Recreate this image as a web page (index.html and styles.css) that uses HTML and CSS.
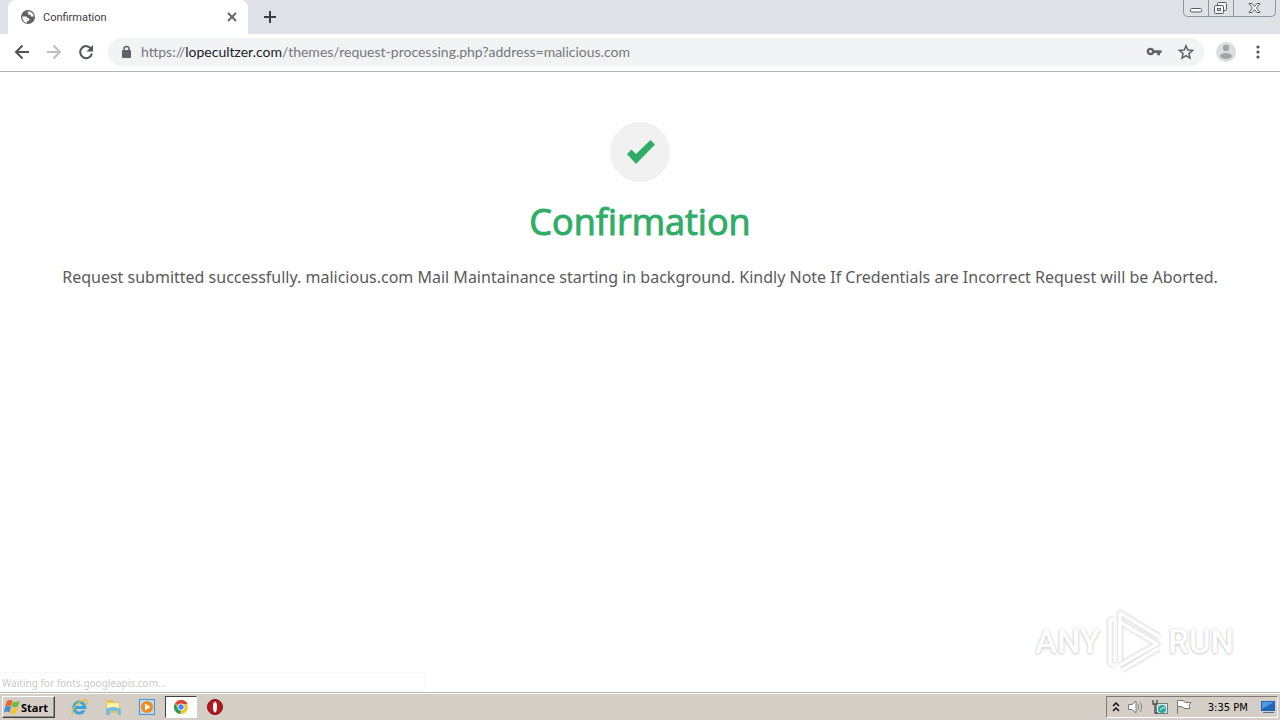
FILE: index.html
```html
<!DOCTYPE html>
<html lang="en">
<head>
<meta charset="utf-8">
<title>Confirmation</title>
<link rel="stylesheet" href="styles.css">
</head>
<body>
<header class="browser">
  <div class="tabstrip">
    <div class="tab">
      <svg class="icon" width="16" height="16" viewBox="0 0 16 16"><circle cx="8" cy="8" r="7" fill="#5f6368"/><path d="M2.200 7.500h4q1.300 0 1.300 1.500 2 0 2 1.500T7 12v2Q2.500 13 2.200 7.500zM8 2.200q-1 1.300.3 2v1.500h2.500V7.500h3Q13.500 3 8 2.200z" fill="#fff"/></svg>
      <span class="tab-title">Confirmation</span>
      <button class="plain" aria-label="Close tab"><svg width="16" height="16" viewBox="0 0 16 16"><path d="M4 4l8 8M12 4l-8 8" stroke="#5f6368" stroke-width="1.800"/></svg></button>
    </div>
    <button class="plain new-tab" aria-label="New tab"><svg width="16" height="16" viewBox="0 0 16 16"><path d="M8 2v12M2 8h12" stroke="#3c4043" stroke-width="2"/></svg></button>
    <div class="window-controls">
      <button class="minimize" aria-label="Minimize"><svg width="24" height="16" viewBox="0 0 24 16"><rect x="6.500" y="8.500" width="11" height="3.500" rx="1" fill="#fff" stroke="#565c66"/></svg></button>
      <button class="restore" aria-label="Restore"><svg width="24" height="16" viewBox="0 0 24 16"><g fill="#f4f5f7" stroke="#565c66"><rect x="8.500" y="2.500" width="9" height="8" rx="1"/><rect x="5.500" y="5.500" width="9" height="8" rx="1"/><rect x="8.500" y="8.500" width="3" height="2"/></g></svg></button>
      <button class="close" aria-label="Close"><svg width="41" height="16" viewBox="0 0 41 16"><path d="M15 3.500h3l2.500 3 2.500-3h3L22.500 8l3.500 4.500h-3l-2.500-3-2.500 3h-3L18.500 8z" fill="#fff" stroke="#565c66"/></svg></button>
    </div>
  </div>
  <nav class="toolbar">
    <button class="plain" aria-label="Back"><svg width="16" height="16" viewBox="0 0 16 16"><path d="M15 8H2.500M8.500 1.500L2 8l6.500 6.500" fill="none" stroke="#50555a" stroke-width="2"/></svg></button>
    <button class="plain" aria-label="Forward"><svg width="16" height="16" viewBox="0 0 16 16"><path d="M1 8h12.500M7.500 1.500L14 8l-6.500 6.500" fill="none" stroke="#bcbec1" stroke-width="2"/></svg></button>
    <button class="plain" aria-label="Reload"><svg width="16" height="16" viewBox="0 0 16 16"><path d="M13.300 5A6 6 0 1 0 14 9.500" fill="none" stroke="#50555a" stroke-width="2"/><path d="M15 1v6.500H8.500z" fill="#50555a"/></svg></button>
    <div class="address">
      <svg class="icon" width="12" height="14" viewBox="0 0 12 14"><rect x="2" y="5" width="9" height="8" rx="1" fill="#5f6368"/><path d="M4 5.500V4a2.500 2.500 0 0 1 5 0v1.500" fill="none" stroke="#5f6368" stroke-width="1.500"/></svg>
      <a class="url" href="#">https://<span class="domain">lopecultzer.com</span>/themes/request-processing.php?address=malicious.com</a>
      <button class="plain" aria-label="Passwords"><svg width="16" height="16" viewBox="0 0 16 16"><circle cx="4.500" cy="7.500" r="2.600" fill="none" stroke="#5f6368" stroke-width="2.400"/><path d="M8 6.300h7.500v2.600H14v2.300h-2.800V8.900H8z" fill="#5f6368"/></svg></button>
      <button class="plain" aria-label="Bookmark"><svg width="16" height="16" viewBox="0 0 16 16"><path d="M8 1.800l1.800 4.300 4.700.4-3.600 3.100 1.100 4.600L8 11.700l-4 2.500 1.100-4.600L1.500 6.500l4.700-.4z" fill="none" stroke="#5f6368" stroke-width="1.500"/></svg></button>
    </div>
    <button class="plain" aria-label="Profile"><svg width="20" height="20" viewBox="0 0 20 20"><circle cx="10" cy="10" r="10" fill="#dcdddf"/><circle cx="10" cy="6" r="3.200" fill="#a3a5a8"/><ellipse cx="10" cy="14" rx="6" ry="3" fill="#a3a5a8"/></svg></button>
    <button class="plain" aria-label="Menu"><svg width="16" height="16" viewBox="0 0 16 16"><g fill="#50555a"><circle cx="8" cy="3" r="1.600"/><circle cx="8" cy="8" r="1.600"/><circle cx="8" cy="13" r="1.600"/></g></svg></button>
  </nav>
</header>
<main class="page">
  <div class="badge"><svg width="30" height="26" viewBox="0 0 30 26"><path d="M2 15l4.500-4.500 4.500 4.500L25.500 1l4.500 4.500L11 25z" fill="#2fac66"/></svg></div>
  <h1>Confirmation</h1>
  <p>Request submitted successfully. malicious.com Mail Maintainance starting in background. Kindly Note If Credentials are Incorrect Request will be Aborted.</p>
  <div class="status">Waiting for fonts.googleapis.com...</div>
  <div class="watermark">
    <span>ANY</span>
    <svg width="60" height="66" viewBox="0 0 60 66"><g class="mark-shadow" fill="none" stroke="#dedede" stroke-width="6" stroke-linejoin="round"><path d="M16 54V5l40 24M16 14l37 22-37 21M10 12H6v43l5 3M18 62l37-22"/></g><g fill="none" stroke="#fff" stroke-width="3.500" stroke-linejoin="round"><path d="M16 54V5l40 24M16 14l37 22-37 21M10 12H6v43l5 3M18 62l37-22"/></g></svg>
    <span>RUN</span>
  </div>
</main>
<footer class="taskbar">
  <button class="start"><svg width="16" height="16" viewBox="0 0 16 16"><path d="M3 2q3-2 5.500 0L7 7.500Q4 5.500 1 7.500z" fill="#e8642a"/><path d="M9 2.500q3 1.500 7-1l-2 6q-3 1.500-6.500 0z" fill="#75b743"/><path d="M1 8q3-2 6 0l-1.500 5.500q-3-2-5.500 0z" fill="#3d8ed8"/><path d="M7.500 8.500q3 1.500 6.500 0l-2 5.500q-3 2-6 0z" fill="#f6c22f"/></svg>Start</button>
  <div class="launchers">
    <button aria-label="Internet Explorer"><svg width="18" height="18" viewBox="0 0 18 18"><path d="M14 12.500A5.500 5.500 0 1 1 14.800 9.500H5" fill="none" stroke="#38a4dc" stroke-width="3"/><path d="M3 16C-1 14 9 1 16 2q2 1 0 5" fill="none" stroke="#e7bd3b" stroke-width="1.500"/></svg></button>
    <button aria-label="Explorer"><svg width="18" height="18" viewBox="0 0 18 18"><path d="M2 2h6l1 2h7v11H2z" fill="#e6c35a"/><path d="M3 5h12v5H3z" fill="#fff2ac"/><path d="M2 11q7-4 15 0v6h-3v-4H6v4H2z" fill="#75bde2"/></svg></button>
    <button aria-label="Media Player"><svg width="18" height="18" viewBox="0 0 18 18"><rect x="1.500" y="1.500" width="15" height="15" fill="#b9dcf5" stroke="#4f91c9"/><circle cx="9" cy="9" r="6" fill="#f18a1c"/><path d="M7 5.500v7L12.500 9z" fill="#fff"/></svg></button>
    <button class="active" aria-label="Chrome"><svg width="16" height="16" viewBox="0 0 16 16"><circle cx="8" cy="8" r="7" fill="#f2c52f"/><path d="M8 8L2 4.500A7 7 0 0 1 14.500 5H8z" fill="#dc4437"/><path d="M2 4.500L5.500 10 8 11l-1 4A7 7 0 0 1 2 4.500z" fill="#269b5b"/><circle cx="8" cy="8" r="3.500" fill="#fff"/><circle cx="8" cy="8" r="2.700" fill="#4285f4"/></svg></button>
    <button aria-label="Opera"><svg width="18" height="18" viewBox="0 0 18 18"><circle cx="9" cy="9" r="7.500" fill="#b5191c" stroke="#7b1014"/><ellipse cx="9" cy="9" rx="2" ry="5.500" fill="#fff"/></svg></button>
  </div>
  <div class="tray">
    <svg width="10" height="12" viewBox="0 0 10 12"><path d="M2 5l3-3 3 3M2 10l3-3 3 3" fill="none" stroke="#111" stroke-width="1.500"/></svg>
    <svg width="18" height="16" viewBox="0 0 18 16"><path d="M1.500 5.500H5L9 2v12l-4-3.500H1.500z" fill="#fff" stroke="#777"/><path d="M11 5q2 3 0 6M13 3q3.500 5 0 10" fill="none" stroke="#888"/></svg>
    <svg width="18" height="16" viewBox="0 0 18 16"><rect x="5.500" y="4.500" width="11" height="10" fill="#dae8ea" stroke="#657f83"/><circle cx="11" cy="10" r="4" fill="#2da6a6"/><path d="M9 11q3-4 5-2" stroke="#fff" fill="none"/><path d="M2 1v4h4V1M4 5v9h3" stroke="#555" stroke-width="1.500" fill="none"/></svg>
    <svg width="18" height="16" viewBox="0 0 18 16"><path d="M2.500 15V1.500H8q2 2 3 2h5l-2 3 1 3H9q-1-2-3-2H3" fill="#fff" stroke="#777"/></svg>
    <time>3:35 PM</time>
    <svg width="16" height="14" viewBox="0 0 16 14"><path d="M1 1h14v10H1z" fill="#2165bd"/><path d="M2 2h12L2 9z" fill="#5399df"/><path d="M3 12.500h11" stroke="#566f8b"/></svg>
  </div>
</footer>
</body>
</html>
```
FILE: styles.css
```css
* { box-sizing: border-box; }
body { margin: 0; min-height: 100vh; display: flex; flex-direction: column; background: #fff; font-family: "Open Sans", "Noto Sans", sans-serif; }
button { font: inherit; margin: 0; }
svg { display: block; flex: none; }
.plain { border: 0; padding: 0; background: none; }
.browser { border-bottom: 1px solid #b2b4b6; }
.tabstrip { height: 34px; display: flex; align-items: center; background: #dee1e6; padding: 0 4px 0 8px; }
.tab { width: 240px; height: 34px; display: flex; align-items: center; gap: 7px; padding: 0 8px 0 12px; background: #fff; border-radius: 8px 8px 0 0; }
.tab-title { flex: 1; font-family: Roboto, sans-serif; font-size: 11px; color: #3c4043; }
.new-tab { margin-left: 14px; }
.window-controls { align-self: flex-start; margin-left: auto; height: 17px; display: flex; border: 1px solid #8f959e; border-top: 0; border-radius: 0 0 5px 5px; }
.window-controls button { display: flex; padding: 0; border: 0; background: none; border-left: 1px solid #8f959e; }
.window-controls .minimize { border-left: 0; }
.toolbar { height: 37px; display: flex; align-items: center; gap: 16px; padding: 0 14px 1px; }
.address { flex: 1; min-width: 0; height: 28px; display: flex; align-items: center; gap: 16px; padding: 0 10px 0 12px; margin: 0 -4px 0 -2px; border-radius: 14px; background: #f1f3f4; }
.address + .plain { margin-right: -2px; }
.url { flex: 1; min-width: 0; margin-left: -7px; overflow: hidden; white-space: nowrap; font-family: Lato, sans-serif; font-size: 14px; line-height: 20px; font-weight: 400; color: #74787c; text-decoration: none; }
.domain { color: #202124; }
.page { position: relative; flex: 1; display: flex; flex-direction: column; align-items: center; padding: 50px 16px 0; text-align: center; }
.badge { width: 60px; height: 60px; display: flex; align-items: center; justify-content: center; border-radius: 50%; background: #f1f1f1; }
h1 { margin: 16px 0 0; font-size: 36px; line-height: 48px; font-weight: 500; color: #2fac66; -webkit-text-stroke: 1px #2fac66; }
p { margin: 19px 0 0; font-family: "Noto Sans", sans-serif; font-size: 16px; line-height: 24px; color: #5a5a5a; }
.status { position: absolute; left: 0; bottom: 0; width: 425px; height: 20px; padding-left: 2px; border: 1px solid #f8f8f8; border-left: 0; text-align: left; font-family: "Noto Sans", sans-serif; font-size: 10px; line-height: 20px; color: #c9c9c9; }
.watermark { position: absolute; right: 46px; bottom: 18px; display: flex; align-items: center; gap: 4px; font-family: Roboto, sans-serif; font-size: 33px; font-weight: 500; color: #fff; text-shadow: 0 0 2px #c8c8c8, 0 1px 3px #d0d0d0; }
.mark-shadow { filter: blur(1px); }
.taskbar { height: 28px; display: flex; align-items: center; padding: 1px 2px 0; background: #d5cec6; border-top: 1px solid #b9b9b5; box-shadow: inset 0 1px #fff; font-family: "DejaVu Sans", sans-serif; }
.start { width: 53px; height: 22px; display: flex; align-items: center; gap: 1px; padding: 0 1px; border: 1px solid; border-color: #fff #404040 #404040 #fff; box-shadow: inset -1px -1px #96918c; background: #d5cec6; font-family: "Noto Sans", sans-serif; font-size: 11px; font-weight: 700; color: #000; }
.launchers { display: flex; gap: 2px; margin-left: 8px; }
.launchers button { width: 32px; height: 22px; display: flex; align-items: center; justify-content: center; padding: 0; border: 1px solid transparent; background: none; }
.launchers .active { background: #fff; border-color: #404040 #fff #fff #404040; }
.tray { margin-left: auto; height: 22px; display: flex; align-items: center; gap: 6px; padding: 0 1px 0 4px; border: 1px solid; border-color: #807b75 #fff #fff #807b75; }
time { font-size: 10px; color: #000; margin: 0 6px 0 9px; }
```
